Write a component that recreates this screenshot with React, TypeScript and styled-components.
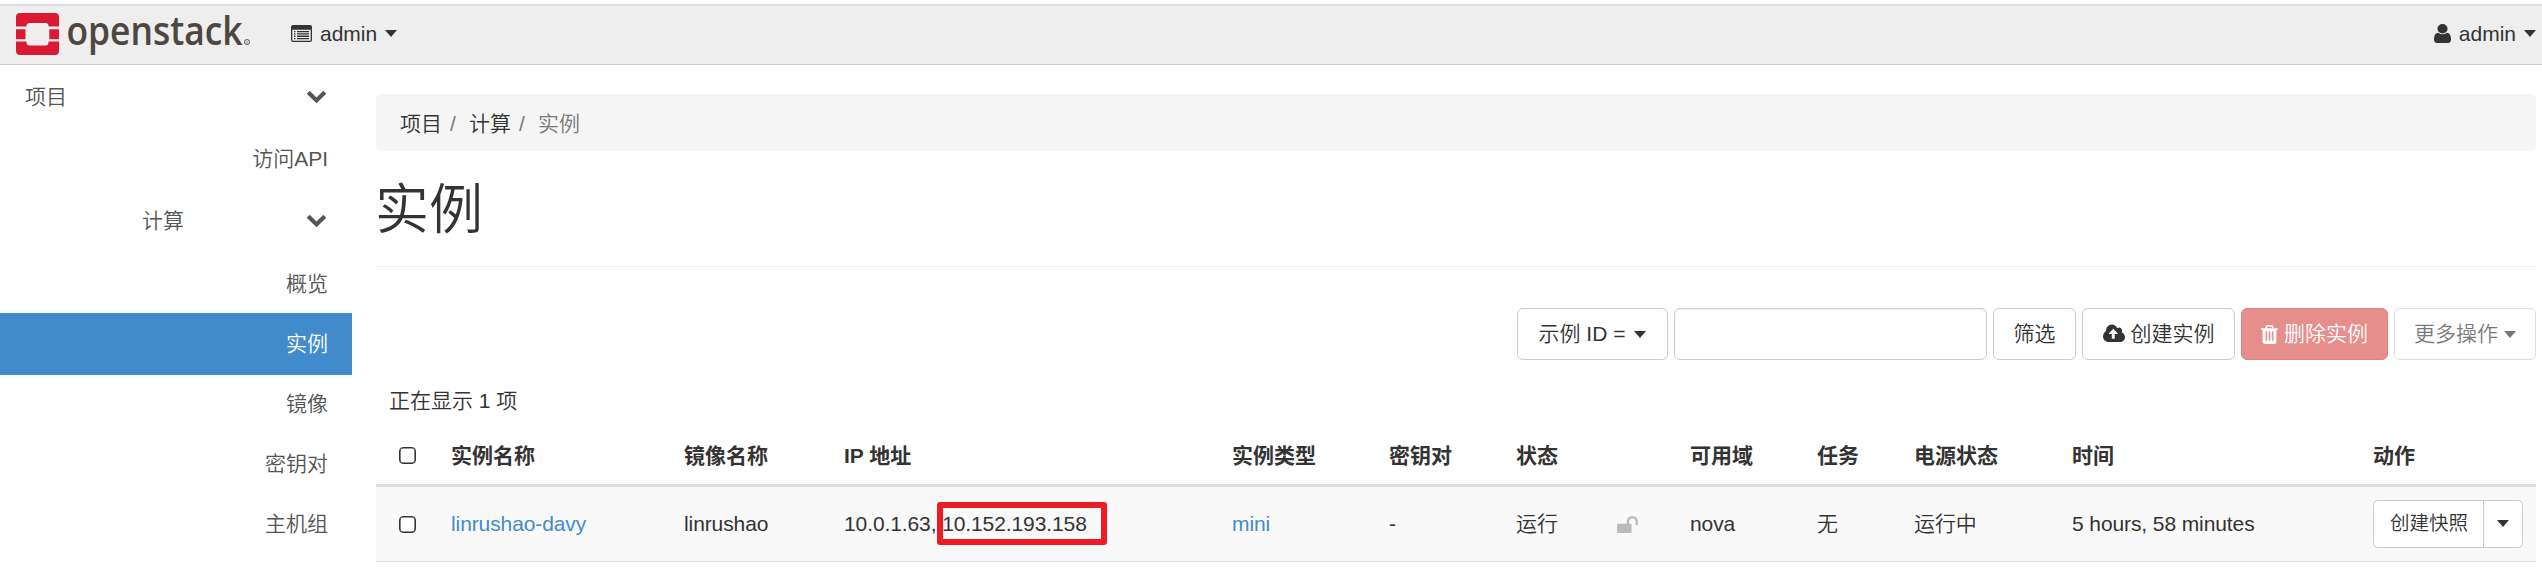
import React from "react";
import styled, { createGlobalStyle } from "styled-components";

const GlobalStyle = createGlobalStyle`
  * { box-sizing: border-box; }
  body {
    margin: 0;
    background: #fff;
    color: #333;
    font: 350 21px/30px "Liberation Sans", "Noto Sans CJK SC", sans-serif;
    overflow: hidden;
  }
`;

const Page = styled.div`
  height: 571px;
  padding-top: 4px;
  overflow: hidden;
`;

const Navbar = styled.header`
  display: flex;
  align-items: center;
  height: 61px;
  padding: 0 6px 0 16px;
  background: #eee;
  border-top: 2px solid #ddd;
  border-bottom: 1px solid #ccc;
`;

const Brand = styled.div`
  width: 275px;
  height: 58px;
`;

const NavItem = styled.div<{ $end?: boolean }>`
  display: flex;
  align-items: center;
  height: 58px;
  padding-bottom: 3px;
  margin-left: ${(p) => (p.$end ? "auto" : "0")};
`;

const NavText = styled.span`
  margin: 1px 8px 0;
`;

const Caret = styled.span<{ $gap?: number }>`
  flex: none;
  width: 12px;
  height: 7px;
  margin-left: ${(p) => p.$gap ?? 0}px;
  border: 6px solid transparent;
  border-top: 7px solid currentColor;
  border-bottom: 0;
`;

const Glyph = styled.svg`
  display: block;
  flex: none;
  fill: currentColor;
  overflow: visible;
`;

const Body = styled.div`
  display: flex;
`;

const Sidebar = styled.nav`
  width: 352px;
  flex: none;
  color: #555;
`;

const Group = styled.div<{ $indent: number; $height: number }>`
  display: flex;
  align-items: center;
  justify-content: space-between;
  height: ${(p) => p.$height}px;
  padding: 0 26px 0 ${(p) => p.$indent}px;
`;

const Link = styled.div<{ $active?: boolean }>`
  display: flex;
  align-items: center;
  justify-content: flex-end;
  height: ${(p) => (p.$active ? 62 : 60)}px;
  margin-bottom: ${(p) => (p.$active ? -2 : 0)}px;
  padding: ${(p) => (p.$active ? 0 : 2)}px 24px 0 0;
  background: ${(p) => (p.$active ? "#428bca" : "transparent")};
  color: ${(p) => (p.$active ? "#fff" : "#555")};
`;

const Main = styled.main`
  flex: 1;
  min-width: 0;
  padding: 29px 6px 0 24px;
`;

const Breadcrumb = styled.div`
  display: flex;
  align-items: center;
  height: 57px;
  padding: 2px 24px 0;
  border-radius: 6px;
  background: #f5f5f5;
`;

const Crumb = styled.span<{ $current?: boolean }>`
  color: ${(p) => (p.$current ? "#777" : "#333")};
`;

const Slash = styled.span`
  width: 27px;
  padding-left: 8px;
  color: #777;
`;

const Title = styled.h1`
  height: 116px;
  margin: 0 0 41px -1px;
  padding-top: 29px;
  border-bottom: 1px solid #eee;
  font-size: 54px;
  line-height: 60px;
  font-weight: 350;
`;

const Toolbar = styled.div`
  display: flex;
  justify-content: flex-end;
  gap: 6px;
  height: 52px;
`;

const Button = styled.button<{ $width: number; $danger?: boolean; $disabled?: boolean }>`
  display: flex;
  align-items: center;
  justify-content: center;
  gap: 6px;
  width: ${(p) => p.$width}px;
  height: 52px;
  padding: 0;
  border: 1px solid ${(p) => (p.$danger ? "#d43f3a" : "#ccc")};
  border-radius: 6px;
  background: ${(p) => (p.$danger ? "#d9534f" : "#fff")};
  color: ${(p) => (p.$danger ? "#fff" : "#333")};
  font: inherit;
  white-space: pre;
  opacity: ${(p) => (p.$disabled ? 0.65 : 1)};
`;

const SearchInput = styled.input`
  width: 313px;
  height: 52px;
  border: 1px solid #ccc;
  border-radius: 6px;
  background: #fff;
  box-shadow: inset 0 1px 2px rgba(0, 0, 0, 0.08);
`;

const Table = styled.table`
  width: 2160px;
  table-layout: fixed;
  border-collapse: separate;
  border-spacing: 0;
`;

const Caption = styled.caption`
  height: 69px;
  padding: 26px 13px 0;
  text-align: left;
`;

const Th = styled.th`
  height: 58px;
  padding: 0 0 2px 12px;
  border-bottom: 3px solid #ddd;
  text-align: left;
  font-weight: 700;
  white-space: nowrap;
`;

const Td = styled.td<{ $link?: boolean }>`
  height: 75px;
  padding: 0 0 0 12px;
  background: #f9f9f9;
  border-bottom: 1px solid #ddd;
  color: ${(p) => (p.$link ? "#428bca" : "#333")};
  letter-spacing: -0.1px;
  white-space: nowrap;
`;

const CheckBox = styled.span`
  display: block;
  width: 17px;
  height: 17px;
  margin-left: 11px;
  border: 1px solid #333;
  border-radius: 4px;
  background: #fff;
  box-shadow: inset 0 0 0 0.6px #333;
`;

const Addresses = styled.span`
  position: relative;
`;

const Highlight = styled.span`
  position: absolute;
  left: 93px;
  top: -10px;
  width: 170px;
  height: 43px;
  border: 6px solid #ed1c24;
  border-radius: 3px;
`;

const SplitButton = styled.div`
  display: flex;
  width: 150px;
  height: 48px;
  border: 1px solid #ccc;
  border-radius: 5px;
  background: #fff;
`;

const SplitMain = styled.span`
  display: flex;
  align-items: center;
  justify-content: center;
  width: 110px;
  padding: 0 0 3px 1px;
  border-right: 1px solid #ccc;
  font-size: 19.5px;
  letter-spacing: 0;
`;

const SplitToggle = styled.span`
  display: flex;
  flex: 1;
  align-items: center;
  justify-content: center;
  padding-bottom: 2px;
`;

const Chevron = () => (
  <Glyph width="19" height="12" viewBox="90 533 1612 1035" preserveAspectRatio="none">
    <path d="M1683 808l-742 741q-19 19-45 19t-45-19l-742-741q-19-19-19-45.500t19-45.500l166-165q19-19 45-19t45 19l531 531 531-531q19-19 45-19t45 19l166 165q19 19 19 45.500t-19 45.500z" />
  </Glyph>
);

const Logo = () => (
  <Glyph width="240" height="58" viewBox="16 6 240 58">
    <g fill="#da1a32">
      <path d="M20 13h35q4 0 4 4v9.500H48.500V26q0-3-3-3h-16q-3 0-3 3v.5H16V17q0-4 4-4z" />
      <path d="M16 29.200h9.500v10H16zM49.300 29.200H59v10h-9.700z" />
      <path d="M16 41.500h10.500v.5q0 3.500 3 3.500h16q3 0 3-3.500v-.5H59V51q0 4-4 4H20q-4 0-4-4z" />
    </g>
    <text x="66.500" y="44.800" fill="#4f463f" stroke="#4f463f" strokeWidth="0.100" fontFamily="Open Sans" fontWeight="600" fontSize="39" textLength="176" lengthAdjust="spacingAndGlyphs">
      openstack
    </text>
    <circle cx="247" cy="42" r="2.500" fill="none" stroke="#4f463f" strokeWidth="0.900" />
    <text x="245.700" y="43.500" fill="#4f463f" fontFamily="Open Sans" fontSize="4">R</text>
  </Glyph>
);

const ListIcon = () => (
  <Glyph width="21" height="17" viewBox="0 0 21 17">
    <path fillRule="evenodd" d="M2 0h17q2 0 2 2v13q0 2-2 2H2q-2 0-2-2V2q0-2 2-2zm-.7 4.700V15q0 .7.700.7h17q.7 0 .7-.7V4.700z" />
    <path d="M3 6h1.500v1.300H3zM3 8.300h1.500v1.300H3zM3 10.600h1.500v1.300H3zM3 12.900h1.500v1.300H3zM6 6h12v1.300H6zM6 8.300h12v1.300H6zM6 10.600h12v1.300H6zM6 12.900h12v1.300H6z" />
  </Glyph>
);

const UserIcon = () => (
  <Glyph width="17" height="19" viewBox="256 128 1280 1536" preserveAspectRatio="none">
    <path d="M1536 1399q0 109-62.500 187t-150.500 78h-854q-88 0-150.500-78t-62.500-187q0-85 8.500-160.500t31.500-152 58.500-131 94-89 134.500-34.500q131 128 313 128t313-128q76 0 134.500 34.500t94 89 58.500 131 31.500 152 8.500 160.500zm-256-887q0 159-112.500 271.500t-271.500 112.500-271.500-112.500-112.500-271.500 112.500-271.500 271.500-112.500 271.500 112.500 112.500 271.500z" />
  </Glyph>
);

const CloudIcon = () => (
  <Glyph width="22" height="16" viewBox="-64 256 1920 1280" preserveAspectRatio="none">
    <path d="M1216 864q0-14-9-23l-352-352q-9-9-23-9t-23 9l-351 351q-10 12-10 24 0 14 9 23t23 9h224v352q0 13 9.500 22.500t22.500 9.500h192q13 0 22.500-9.500t9.500-22.500v-352h224q13 0 22.500-9.500t9.500-22.500zm640 288q0 159-112.500 271.500t-271.500 112.500h-1088q-185 0-316.500-131.500t-131.500-316.500q0-130 70-240t188-165q-2-30-2-43 0-212 150-362t362-150q156 0 285.500 87t188.500 231q71-62 166-62 106 0 181 75t75 181q0 76-41 138 130 31 213.500 135.500t83.500 238.500z" />
  </Glyph>
);

const TrashIcon = () => (
  <Glyph width="17" height="19" viewBox="192 128 1408 1536" preserveAspectRatio="none">
    <path d="M704 1376v-704q0-14-9-23t-23-9h-64q-14 0-23 9t-9 23v704q0 14 9 23t23 9h64q14 0 23-9t9-23zm256 0v-704q0-14-9-23t-23-9h-64q-14 0-23 9t-9 23v704q0 14 9 23t23 9h64q14 0 23-9t9-23zm256 0v-704q0-14-9-23t-23-9h-64q-14 0-23 9t-9 23v704q0 14 9 23t23 9h64q14 0 23-9t9-23zm-544-992h448l-48-117q-7-9-17-11h-317q-10 2-17 11zm928 32v64q0 14-9 23t-23 9h-96v948q0 83-47 143.500t-113 60.500h-832q-66 0-113-58.500t-47-141.500v-952h-96q-14 0-23-9t-9-23v-64q0-14 9-23t23-9h309l70-167q15-37 54-63t79-26h320q40 0 79 26t54 63l70 167h309q14 0 23 9t9 23z" />
  </Glyph>
);

const UnlockIcon = () => (
  <Glyph width="21" height="17" color="#bbb" viewBox="64 128 1664 1408" preserveAspectRatio="none">
    <path d="M1728 576v256q0 26-19 45t-45 19h-64q-26 0-45-19t-19-45v-256q0-106-75-181t-181-75-181 75-75 181v192h96q40 0 68 28t28 68v576q0 40-28 68t-68 28h-960q-40 0-68-28t-28-68v-576q0-40 28-68t68-28h672v-192q0-185 131.500-316.500t316.500-131.500 316.500 131.500 131.500 316.500z" />
  </Glyph>
);

const columns: [string, number][] = [
  ["实例名称", 233],
  ["镜像名称", 160],
  ["IP 地址", 388],
  ["实例类型", 157],
  ["密钥对", 127],
  ["状态", 101],
  ["", 73],
  ["可用域", 127],
  ["任务", 97],
  ["电源状态", 158],
  ["时间", 301],
  ["动作", 175],
];

export default function App() {
  return (
    <Page>
      <GlobalStyle />
      <Navbar>
        <Brand><Logo /></Brand>
        <NavItem>
          <ListIcon />
          <NavText>admin</NavText>
          <Caret />
        </NavItem>
        <NavItem $end>
          <UserIcon />
          <NavText>admin</NavText>
          <Caret />
        </NavItem>
      </Navbar>
      <Body>
        <Sidebar>
          <Group $indent={25} $height={63}>项目<Chevron /></Group>
          <Link>访问API</Link>
          <Group $indent={142} $height={65}>计算<Chevron /></Group>
          <Link>概览</Link>
          <Link $active>实例</Link>
          <Link>镜像</Link>
          <Link>密钥对</Link>
          <Link>主机组</Link>
        </Sidebar>
        <Main>
          <Breadcrumb>
            <Crumb>项目</Crumb><Slash>/</Slash>
            <Crumb>计算</Crumb><Slash>/</Slash>
            <Crumb $current>实例</Crumb>
          </Breadcrumb>
          <Title>实例</Title>
          <Toolbar>
            <Button $width={151}>示例 ID =<Caret $gap={3} /></Button>
            <SearchInput />
            <Button $width={83}>筛选</Button>
            <Button $width={153}><CloudIcon />创建实例</Button>
            <Button $width={147} $danger $disabled><TrashIcon />删除实例</Button>
            <Button $width={142} $disabled>更多操作<Caret /></Button>
          </Toolbar>
          <Table>
            <Caption>正在显示 1 项</Caption>
            <colgroup>
              <col width={63} />
              {columns.map(([, width], i) => <col key={i} width={width} />)}
            </colgroup>
            <thead>
              <tr>
                <Th><CheckBox /></Th>
                {columns.map(([label], i) => <Th key={i}>{label}</Th>)}
              </tr>
            </thead>
            <tbody>
              <tr>
                <Td><CheckBox /></Td>
                <Td $link>linrushao-davy</Td>
                <Td>linrushao</Td>
                <Td><Addresses>10.0.1.63, 10.152.193.158<Highlight /></Addresses></Td>
                <Td $link>mini</Td>
                <Td>-</Td>
                <Td>运行</Td>
                <Td><UnlockIcon /></Td>
                <Td>nova</Td>
                <Td>无</Td>
                <Td>运行中</Td>
                <Td>5 hours, 58 minutes</Td>
                <Td>
                  <SplitButton>
                    <SplitMain>创建快照</SplitMain>
                    <SplitToggle><Caret /></SplitToggle>
                  </SplitButton>
                </Td>
              </tr>
            </tbody>
          </Table>
        </Main>
      </Body>
    </Page>
  );
}
